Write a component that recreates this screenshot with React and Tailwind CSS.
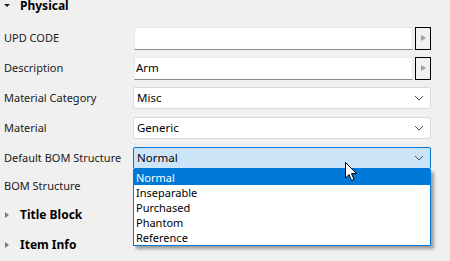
import { useState } from "react";

const font = { fontFamily: '"Noto Sans", "Liberation Sans", sans-serif' };

const Chevron = () => (
  <svg width="10" height="6" viewBox="0 0 10 6" className="shrink-0">
    <polyline points="1,1 5,5 9,1" fill="none" stroke="#505050" strokeWidth="1" />
  </svg>
);

const Caret = ({ open }) =>
  open ? (
    <svg width="8" height="8" viewBox="0 0 8 8" className="shrink-0">
      <polygon points="1,2 7,2 4,5" fill="#1a1a1a" />
    </svg>
  ) : (
    <svg width="8" height="8" viewBox="0 0 8 8" className="shrink-0">
      <polygon points="2,1 6,4 2,7" fill="#7a7a7a" />
    </svg>
  );

const Label = ({ children }) => (
  <div className="w-[133px] shrink-0 pl-[4px] text-[11px] text-[#1a1a1a] leading-[16px]">
    {children}
  </div>
);

const TextRow = ({ label, value }) => (
  <div className="flex h-[30px] items-center">
    <Label>{label}</Label>
    <div className="ml-[1px] flex h-[23px] w-[279px] items-center border border-[#e8e8e8] border-b-[#8a8a8a] bg-white pl-[1px] text-[11.5px] text-black">
      {value}
    </div>
    <div className="ml-[2px] flex h-[23px] w-[16px] items-center justify-center border border-black bg-[#f0f0f0]">
      <svg width="5" height="6" viewBox="0 0 5 6">
        <polygon points="0,0 5,3 0,6" fill="#a0a0a0" />
      </svg>
    </div>
  </div>
);

const SelectRow = ({ label, value, active, children }) => (
  <div className="flex h-[30px] items-center">
    <Label>{label}</Label>
    <div className="relative">
      <div
        className={`flex h-[22px] w-[298px] items-center justify-between rounded-[2px] border pl-[3px] pr-[6px] text-[11.5px] text-black ${
          active ? "border-[#0078d7] bg-[#cce4f7]" : "border-[#d9d9d9] bg-white"
        }`}
      >
        <span>{value}</span>
        <Chevron />
      </div>
      {children}
    </div>
  </div>
);

const options = ["Normal", "Inseparable", "Purchased", "Phantom", "Reference"];

export default function App() {
  const [selected] = useState("Normal");

  return (
    <div className="relative h-[261px] w-[450px] overflow-hidden bg-[#f0f0f0]" style={font}>
      {/* Physical header */}
      <div className="flex h-[23px] items-start">
        <div className="-mt-[2px] flex items-center">
          <div className="ml-[3px] w-[17px]">
            <Caret open />
          </div>
          <span className="text-[12px] font-bold leading-[16px] text-black">Physical</span>
        </div>
      </div>

      <TextRow label="UPD CODE" value="" />
      <TextRow label="Description" value="Arm" />
      <SelectRow label="Material Category" value="Misc" />
      <SelectRow label="Material" value="Generic" />
      <SelectRow label="Default BOM Structure" value={selected} active>
        <div className="absolute left-0 top-full z-10 w-[298px] border border-[#0078d7] bg-white shadow-[3px_3px_3px_rgba(0,0,0,0.35)]">
          {options.map((o) => (
            <div
              key={o}
              className={`h-[15px] pl-[2px] text-[11px] leading-[15px] ${
                o === selected ? "bg-[#0078d7] text-white" : "text-black"
              }`}
            >
              {o}
            </div>
          ))}
        </div>
      </SelectRow>

      <div className="flex h-[26px] items-center">
        <Label>BOM Structure</Label>
      </div>

      {/* Collapsed groups */}
      <div className="flex h-[32px] items-center">
        <div className="ml-[3px] w-[17px]">
          <Caret />
        </div>
        <span className="text-[12px] font-bold text-black">Title Block</span>
      </div>
      <div className="flex h-[28px] items-center">
        <div className="ml-[3px] w-[17px]">
          <Caret />
        </div>
        <span className="text-[12px] font-bold text-black">Item Info</span>
      </div>

      {/* Mouse pointer */}
      <svg
        className="absolute left-[345px] top-[162px] z-20"
        width="13"
        height="20"
        viewBox="0 0 13 20"
      >
        <path
          d="M0.5 0.5 L0.5 16 L4 12.5 L6.5 18.5 L9 17.5 L6.5 11.5 L11.5 11.5 Z"
          fill="white"
          stroke="black"
          strokeWidth="1"
        />
      </svg>
    </div>
  );
}
